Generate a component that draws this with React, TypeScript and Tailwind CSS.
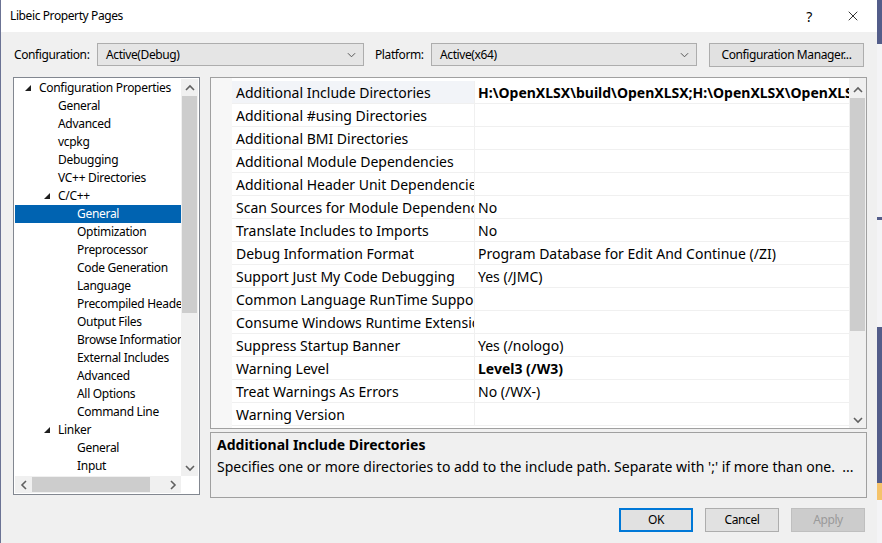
import { X } from "lucide-react";

const tree: { label: string; level: number; expanded?: boolean; selected?: boolean }[] = [
  { label: "Configuration Properties", level: 0, expanded: true },
  { label: "General", level: 1 },
  { label: "Advanced", level: 1 },
  { label: "vcpkg", level: 1 },
  { label: "Debugging", level: 1 },
  { label: "VC++ Directories", level: 1 },
  { label: "C/C++", level: 1, expanded: true },
  { label: "General", level: 2, selected: true },
  { label: "Optimization", level: 2 },
  { label: "Preprocessor", level: 2 },
  { label: "Code Generation", level: 2 },
  { label: "Language", level: 2 },
  { label: "Precompiled Headers", level: 2 },
  { label: "Output Files", level: 2 },
  { label: "Browse Information", level: 2 },
  { label: "External Includes", level: 2 },
  { label: "Advanced", level: 2 },
  { label: "All Options", level: 2 },
  { label: "Command Line", level: 2 },
  { label: "Linker", level: 1, expanded: true },
  { label: "General", level: 2 },
  { label: "Input", level: 2 },
];

const props: { name: string; value: string; bold?: boolean }[] = [
  { name: "Additional Include Directories", value: "H:\\OpenXLSX\\build\\OpenXLSX;H:\\OpenXLSX\\OpenXLSX;%(AdditionalIncludeDirectories)", bold: true },
  { name: "Additional #using Directories", value: "" },
  { name: "Additional BMI Directories", value: "" },
  { name: "Additional Module Dependencies", value: "" },
  { name: "Additional Header Unit Dependencies", value: "" },
  { name: "Scan Sources for Module Dependencies", value: "No" },
  { name: "Translate Includes to Imports", value: "No" },
  { name: "Debug Information Format", value: "Program Database for Edit And Continue (/ZI)" },
  { name: "Support Just My Code Debugging", value: "Yes (/JMC)" },
  { name: "Common Language RunTime Support", value: "" },
  { name: "Consume Windows Runtime Extension", value: "" },
  { name: "Suppress Startup Banner", value: "Yes (/nologo)" },
  { name: "Warning Level", value: "Level3 (/W3)", bold: true },
  { name: "Treat Warnings As Errors", value: "No (/WX-)" },
  { name: "Warning Version", value: "" },
];

const Chevron = ({ dir }: { dir: "up" | "down" | "left" | "right" }) => {
  const pts = {
    up: "1,6 5,2 9,6",
    down: "1,2 5,6 9,2",
    left: "6,1 2,5 6,9",
    right: "2,1 6,5 2,9",
  }[dir];
  const vb = dir === "up" || dir === "down" ? "0 0 10 8" : "0 0 8 10";
  const size = dir === "up" || dir === "down" ? "w-[10px] h-[8px]" : "w-[8px] h-[10px]";
  return (
    <svg viewBox={vb} className={size}>
      <polyline points={pts} fill="none" stroke="#606060" strokeWidth="1.6" />
    </svg>
  );
};

const Combo = ({ value, width }: { value: string; width: string }) => (
  <div className={`${width} shrink-0 h-[23px] flex items-center justify-between bg-[#e5e5e5] border border-[#adadad] pl-[8px] pr-[7px]`}>
    <span>{value}</span>
    <svg viewBox="0 0 10 6" className="w-[9px] h-[6px]">
      <polyline points="1,1 5,5 9,1" fill="none" stroke="#555" strokeWidth="1.1" />
    </svg>
  </div>
);

const Triangle = () => (
  <svg viewBox="0 0 7 7" className="w-[6px] h-[6px]">
    <polygon points="7,0 7,7 0,7" fill="#1e1e1e" />
  </svg>
);

const Button = ({ label, variant }: { label: string; variant?: "default" | "disabled" }) => (
  <div
    className={`w-[74px] h-[24px] flex items-center justify-center ${
      variant === "default"
        ? "border-2 border-[#0078d7] bg-[#e1e1e1]"
        : variant === "disabled"
        ? "border border-[#bfbfbf] bg-[#cccccc] text-[#9a9a9a]"
        : "border border-[#adadad] bg-[#e1e1e1]"
    }`}
  >
    {label}
  </div>
);

export default function App() {
  return (
    <div
      className="w-[882px] h-[543px] flex overflow-hidden text-[12px] tracking-[-0.4px] text-black"
      style={{ fontFamily: '"Noto Sans", sans-serif' }}
    >
      <div className="w-[877px] shrink-0 flex flex-col bg-[#f0f0f0] border-l border-[#6b7394]">
        {/* title bar */}
        <div className="h-[32px] bg-white flex items-center pl-[9px] pr-[16px] shrink-0">
          <span className="flex-1">Libeic Property Pages</span>
          <span className="mr-[33px] text-[14px]">?</span>
          <X size={16} strokeWidth={1.2} />
        </div>

        {/* configuration row */}
        <div className="flex items-center h-[23px] mt-[11px] pl-[13px] whitespace-nowrap">
          <span className="w-[83px] shrink-0">Configuration:</span>
          <Combo value="Active(Debug)" width="w-[267px]" />
          <span className="ml-[11px] w-[56px] shrink-0">Platform:</span>
          <Combo value="Active(x64)" width="w-[266px]" />
          <div className="ml-[12px] w-[155px] shrink-0 h-[24px] border border-[#adadad] bg-[#e1e1e1] flex items-center justify-center">
            Configuration Manager...
          </div>
        </div>

        {/* main area */}
        <div className="flex gap-[10px] pl-[12px] mt-[11px]">
          {/* tree */}
          <div className="w-[187px] shrink-0 h-[418px] border border-[#828790] bg-white flex flex-col p-px">
            <div className="flex flex-1 min-h-0">
              <div className="flex-1 overflow-hidden tracking-[-0.3px]">
                {tree.map((t, i) => (
                  <div
                    key={i}
                    className={`h-[18px] flex items-center whitespace-nowrap ${t.selected ? "bg-[#0063b1] text-white" : ""}`}
                    style={{ paddingLeft: 24 + t.level * 19 - (t.expanded ? 14 : 0) }}
                  >
                    {t.expanded && (
                      <span className="w-[14px] shrink-0 flex items-center">
                        <Triangle />
                      </span>
                    )}
                    {t.label}
                  </div>
                ))}
              </div>
              <div className="w-[17px] shrink-0 bg-[#f0f0f0] flex flex-col">
                <div className="h-[17px] flex items-center justify-center"><Chevron dir="up" /></div>
                <div className="h-[217px] bg-[#cdcdcd] mx-px" />
                <div className="flex-1" />
                <div className="h-[17px] flex items-center justify-center"><Chevron dir="down" /></div>
              </div>
            </div>
            <div className="h-[17px] flex">
              <div className="flex-1 bg-[#f0f0f0] flex items-center">
                <div className="w-[17px] flex justify-center"><Chevron dir="left" /></div>
                <div className="w-[118px] h-[15px] bg-[#cdcdcd]" />
                <div className="flex-1" />
                <div className="w-[17px] flex justify-center"><Chevron dir="right" /></div>
              </div>
              <div className="w-[17px] bg-white" />
            </div>
          </div>

          {/* right side */}
          <div className="w-[657px] shrink-0 flex flex-col gap-[3px] text-[14px] tracking-normal">
            <div className="h-[352px] border border-[#a0a0a0] bg-white flex">
              <div className="w-[21px] bg-[#f7f7f7]" />
              <div className="flex-1 pt-[3px] overflow-hidden">
                {props.map((p, i) => (
                  <div key={i} className="h-[23px] flex border-b border-[#f0f0f0]">
                    <div
                      className={`w-[243px] shrink-0 pl-[4px] flex items-center whitespace-nowrap overflow-hidden border-r border-[#f0f0f0] ${
                        i === 0 ? "bg-[#f2f4f8]" : ""
                      }`}
                    >
                      {p.name}
                    </div>
                    <div className={`flex-1 pl-[3px] flex items-center whitespace-nowrap overflow-hidden ${p.bold ? "font-bold" : ""}`}>
                      {p.value}
                    </div>
                  </div>
                ))}
              </div>
              <div className="w-[17px] shrink-0 bg-[#f0f0f0] flex flex-col pt-[3px]">
                <div className="h-[17px] flex items-center justify-center"><Chevron dir="up" /></div>
                <div className="h-[233px] bg-[#cdcdcd] mx-px" />
                <div className="flex-1" />
                <div className="h-[17px] flex items-center justify-center"><Chevron dir="down" /></div>
              </div>
            </div>
            <div className="h-[66px] border border-[#a0a0a0] bg-[#f0f0f0] px-[6px]">
              <div className="font-bold h-[22px] flex items-center">Additional Include Directories</div>
              <div className="h-[22px] flex items-center whitespace-nowrap">
                Specifies one or more directories to add to the include path. Separate with ';' if more than one.&nbsp;&nbsp;...
              </div>
            </div>
          </div>
        </div>

        {/* buttons */}
        <div className="flex justify-end gap-[12px] pr-[12px] mt-[10px]">
          <Button label="OK" variant="default" />
          <Button label="Cancel" />
          <Button label="Apply" variant="disabled" />
        </div>
      </div>

      {/* desktop behind */}
      <div className="w-[5px] flex flex-col">
        <div className="h-[44px] bg-[#535d8a]" />
        <div className="h-[173px] bg-[#f4f4f6]" />
        <div className="h-[3px] bg-[#535d8a]" />
        <div className="h-[107px] bg-[#f4f4f6]" />
        <div className="h-[156px] bg-[#535d8a]" />
        <div className="h-[17px] bg-[#f5c36a]" />
        <div className="flex-1 bg-[#f4f4f6]" />
      </div>
    </div>
  );
}
